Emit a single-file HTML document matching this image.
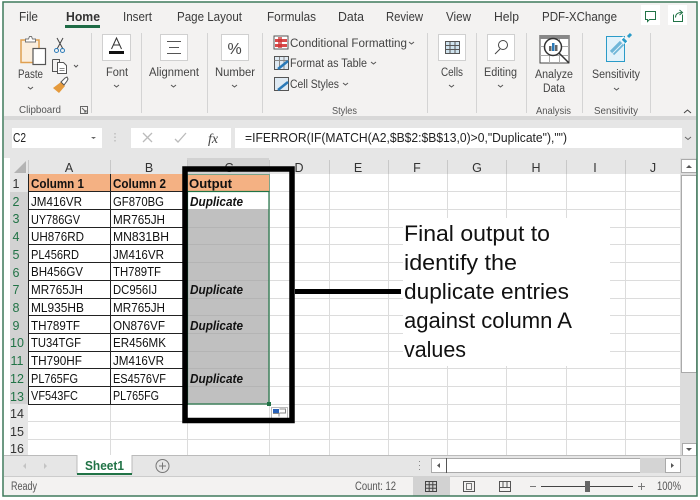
<!DOCTYPE html>
<html><head><meta charset="utf-8"><style>
html,body{margin:0;padding:0;background:#fff;width:700px;height:500px;overflow:hidden}
svg{display:block;filter:blur(.3px)}
text{font-family:"Liberation Sans",sans-serif;fill:#333}
.t{font-size:12.500px;fill:#3a3a3a}
.l{font-size:11.500px;fill:#444}
.s{font-size:10.500px;fill:#555}
.c{font-size:12.500px;fill:#111}
.b{font-size:12.500px;font-weight:bold;fill:#111}
.i{font-size:12.500px;font-weight:bold;font-style:italic;fill:#111}
.r{font-size:12.500px;fill:#217346;text-anchor:middle}
.n{font-size:12.500px;fill:#333;text-anchor:middle}
.k{font-size:22px;fill:#111}
.btn{fill:#fff;stroke:#d0d0d0}
.g{stroke:#dcdcdc;stroke-width:1}
.v{fill:none;stroke:#555;stroke-width:1}
</style></head><body>
<svg width="700" height="500" viewBox="0 0 700 500" xmlns="http://www.w3.org/2000/svg">
<rect width="700" height="500" fill="#fff"/>
<rect x="3" y="2" width="694" height="494" fill="#f3f2f1"/>
<!-- formula bar region -->
<rect x="4" y="116" width="692" height="42" fill="#e6e6e6"/>
<rect x="4" y="116" width="692" height="4" fill="#d8d8d8"/>
<!-- tabs -->
<text class="t" x="19" y="21" textLength="19" lengthAdjust="spacingAndGlyphs">File</text>
<text class="t" x="66" y="21" textLength="34" lengthAdjust="spacingAndGlyphs" style="font-weight:bold;fill:#333">Home</text>
<rect x="65" y="25" width="35" height="3" fill="#1e6b45"/>
<text class="t" x="123" y="21" textLength="29" lengthAdjust="spacingAndGlyphs">Insert</text>
<text class="t" x="177" y="21" textLength="65" lengthAdjust="spacingAndGlyphs">Page Layout</text>
<text class="t" x="267" y="21" textLength="49" lengthAdjust="spacingAndGlyphs">Formulas</text>
<text class="t" x="338" y="21" textLength="26" lengthAdjust="spacingAndGlyphs">Data</text>
<text class="t" x="386" y="21" textLength="37" lengthAdjust="spacingAndGlyphs">Review</text>
<text class="t" x="446" y="21" textLength="25" lengthAdjust="spacingAndGlyphs">View</text>
<text class="t" x="494" y="21" textLength="25" lengthAdjust="spacingAndGlyphs">Help</text>
<text class="t" x="542" y="21" textLength="75" lengthAdjust="spacingAndGlyphs">PDF-XChange</text>
<rect x="641" y="5" width="19" height="20" fill="#fff"/>
<path d="M645.500 11.500h10v8h-6l-2 2v-2h-2z" fill="none" stroke="#217346"/>
<rect x="668" y="5" width="19" height="20" fill="#fff"/>
<path d="M673.500 14.500v7h9v-7M675.500 17.500c0-3 2-5 6-5M679.500 10l3 2.500-3 2.500" fill="none" stroke="#217346"/>
<!-- separators -->
<g fill="#d4d4d4">
<rect x="91" y="33" width="1" height="80"/><rect x="141" y="33" width="1" height="80"/><rect x="207" y="33" width="1" height="80"/><rect x="262" y="33" width="1" height="80"/><rect x="427" y="33" width="1" height="80"/><rect x="476" y="33" width="1" height="80"/><rect x="526" y="33" width="1" height="80"/><rect x="582" y="33" width="1" height="80"/><rect x="650" y="33" width="1" height="80"/>
</g>
<!-- clipboard -->
<rect x="21" y="40" width="18" height="22.500" fill="#fbeedd" stroke="#e0a050" stroke-width="1.500"/>
<path d="M25.500 42v-3h3l1-2.500h2l1 2.500h3v3z" fill="#fff" stroke="#777"/>
<rect x="33" y="48.500" width="12.500" height="16" fill="#fff" stroke="#555" stroke-width="1.200"/>
<path d="M57 38l6 11M63 38l-6 11" stroke="#444" fill="none"/>
<circle cx="56.500" cy="50.500" r="2" fill="none" stroke="#2a7ab8"/><circle cx="62.500" cy="50.500" r="2" fill="none" stroke="#2a7ab8"/>
<path d="M52.500 59.500h7v3M57.500 71.500h-5v-12" fill="none" stroke="#555"/>
<path d="M57.500 62.500h6l3 3v8h-9z" fill="#fff" stroke="#555"/>
<path d="M59.500 68.500h5M59.500 70.500h5" stroke="#888"/>
<path d="M74 65l2 2 2-2" class="v"/>
<path d="M53 88l6 5 6-7-4-4z" fill="#e59a3c"/><path d="M61 82l4-4 2-1 1 2-1 2-3 4z" fill="#fff" stroke="#555"/>
<text class="l" x="18" y="78" textLength="25" lengthAdjust="spacingAndGlyphs">Paste</text>
<path d="M28 87l2.500 2 2.500-2" class="v"/>
<text class="s" x="19" y="113" textLength="42" lengthAdjust="spacingAndGlyphs">Clipboard</text>
<path d="M80.500 106.500h7v7h-7zM82 108l4 4M86 110v2h-2" fill="none" stroke="#666"/>
<!-- font -->
<rect class="btn" x="102.500" y="34.500" width="28" height="26"/>
<path d="M111.500 49l5-11 5 11M113 45h7" fill="none" stroke="#333"/>
<rect x="109" y="51" width="15" height="3" fill="#111"/>
<text class="l" x="106" y="76" textLength="22" lengthAdjust="spacingAndGlyphs">Font</text>
<path d="M114 85l2.500 2 2.500-2" class="v"/>
<!-- alignment -->
<rect class="btn" x="160.500" y="34.500" width="27" height="26"/>
<path d="M167 41.500h14M169 47.500h10M167 53.500h14" stroke="#555" fill="none"/>
<text class="l" x="149" y="76" textLength="50" lengthAdjust="spacingAndGlyphs">Alignment</text>
<path d="M171 85l2.500 2 2.500-2" class="v"/>
<!-- number -->
<rect class="btn" x="221.500" y="34.500" width="27" height="26"/>
<text x="227.500" y="54" style="font-size:16px;fill:#444">%</text>
<text class="l" x="215" y="76" textLength="40" lengthAdjust="spacingAndGlyphs">Number</text>
<path d="M232 85l2.500 2 2.500-2" class="v"/>
<!-- styles -->
<rect x="274" y="36" width="14" height="13" fill="#fff" stroke="#555"/>
<rect x="275" y="39" width="12" height="3" fill="#d94a4a"/><rect x="275" y="44" width="12" height="3" fill="#d94a4a"/><rect x="278" y="37" width="4" height="11" fill="#c33" opacity=".7"/>
<text class="l" x="290" y="47" textLength="117" lengthAdjust="spacingAndGlyphs">Conditional Formatting</text>
<path d="M409 42l2.500 2 2.500-2" class="v"/>
<rect x="274.500" y="56.500" width="14" height="13" fill="#dfeaf3" stroke="#555"/>
<path d="M274.500 60.500h14M279.500 57v12M284 57v12" stroke="#888" fill="none"/>
<path d="M278 69l10-8" stroke="#2a7ab8" stroke-width="2.500"/>
<text class="l" x="290" y="67" textLength="77" lengthAdjust="spacingAndGlyphs">Format as Table</text>
<path d="M371 62l2.500 2 2.500-2" class="v"/>
<rect x="274.500" y="77.500" width="14" height="13" fill="#dfeaf3" stroke="#555"/>
<path d="M278 90l10-8" stroke="#2a7ab8" stroke-width="2.500"/>
<text class="l" x="290" y="88" textLength="49" lengthAdjust="spacingAndGlyphs">Cell Styles</text>
<path d="M343 83l2.500 2 2.500-2" class="v"/>
<text class="s" x="332" y="114" textLength="25" lengthAdjust="spacingAndGlyphs">Styles</text>
<!-- cells -->
<rect class="btn" x="438.500" y="34.500" width="27" height="26"/>
<rect x="445.500" y="41.500" width="14" height="12" fill="#cfe3ee" stroke="#555"/>
<path d="M445 45.500h14M445 49.500h14M450 41v12M455 41v12" stroke="#555"/>
<text class="l" x="441" y="76" textLength="22" lengthAdjust="spacingAndGlyphs">Cells</text>
<path d="M449 85l2.500 2 2.500-2" class="v"/>
<!-- editing -->
<rect class="btn" x="487.500" y="34.500" width="27" height="26"/>
<circle cx="503" cy="45" r="4.500" fill="none" stroke="#444"/><path d="M500 49l-5 5" stroke="#444"/>
<text class="l" x="484" y="76" textLength="33" lengthAdjust="spacingAndGlyphs">Editing</text>
<path d="M498 85l2.500 2 2.500-2" class="v"/>
<!-- analyze -->
<rect x="540" y="35.500" width="29" height="27.500" fill="#fff" stroke="#444"/>
<rect x="540" y="35" width="29" height="4" fill="#888"/>
<path d="M540 46.500h29M540 55.500h29M549.500 39v24M559.500 39v24" stroke="#aaa" fill="none"/>
<circle cx="553" cy="47" r="8.500" fill="#fff" stroke="#333" stroke-width="1.500"/>
<rect x="549" y="46" width="2.500" height="5" fill="#666"/><rect x="552" y="43" width="2.500" height="8" fill="#2a7ab8"/><rect x="555" y="45" width="2.500" height="6" fill="#666"/>
<path d="M559 53l10 10" stroke="#333" stroke-width="1.500"/>
<text class="l" x="535" y="78" textLength="38" lengthAdjust="spacingAndGlyphs">Analyze</text>
<text class="l" x="543" y="92" textLength="22" lengthAdjust="spacingAndGlyphs">Data</text>
<text class="s" x="536" y="114" textLength="35" lengthAdjust="spacingAndGlyphs">Analysis</text>
<!-- sensitivity -->
<path d="M606.500 36.500h18v25h-18z" fill="#e3f2fa" stroke="#2a9bc8"/>
<path d="M612 53l10-10" stroke="#6fb6d8" stroke-width="6"/>
<path d="M612.500 53.500l10-10" stroke="#e3f2fa" stroke-width="1"/>
<path d="M623 42l3-3" stroke="#fff" stroke-width="8"/>
<path d="M623.500 41.500l2-2" stroke="#2a9bc8" stroke-width="5"/>
<path d="M628 37l3-3" stroke="#2a9bc8" stroke-width="3"/>
<text class="l" x="592" y="78" textLength="48" lengthAdjust="spacingAndGlyphs">Sensitivity</text>
<path d="M614 88l2.500 2 2.500-2" class="v"/>
<text class="s" x="594" y="114" textLength="44" lengthAdjust="spacingAndGlyphs">Sensitivity</text>
<path d="M684 113l3.500-3 3.500 3" fill="none" stroke="#444"/>
<!-- name/formula -->
<rect x="12" y="128" width="90" height="20" fill="#fff"/>
<text x="13" y="142" textLength="13" lengthAdjust="spacingAndGlyphs" style="font-size:13px;fill:#222">C2</text>
<path d="M91 137l2.500 2 2.500-2z" fill="#666"/>
<path d="M115 133v10" stroke="#aaa" stroke-dasharray="1.500 2"/>
<rect x="131" y="128" width="100" height="20" fill="#fff"/>
<path d="M143 133l9 9M152 133l-9 9" stroke="#bbb" fill="none" stroke-width="1.300"/>
<path d="M175 139l3 3 8-9" stroke="#bbb" fill="none" stroke-width="1.300"/>
<text x="208" y="143" style="font-family:'Liberation Serif',serif;font-style:italic;font-size:14px;fill:#444">fx</text>
<rect x="235" y="128" width="447" height="20" fill="#fff"/>
<text class="t" x="245" y="142" textLength="322" lengthAdjust="spacingAndGlyphs" style="fill:#222">=IFERROR(IF(MATCH(A2,$B$2:$B$13,0)&gt;0,"Duplicate"),"")</text>
<path d="M685 137l3 2.500 3-2.500" fill="none" stroke="#666"/>
<!-- grid background -->
<rect x="4" y="158" width="692" height="297" fill="#fff"/>
<!-- column header -->
<rect x="10" y="158" width="670" height="16" fill="#e6e6e6"/>
<rect x="187" y="158" width="82" height="16" fill="#d2d2d2"/>
<path d="M14 173l12-12v12z" fill="#b4b4b4"/>
<g fill="#c8c8c8"><rect x="28" y="160" width="1" height="14"/><rect x="110" y="160" width="1" height="14"/><rect x="187" y="160" width="1" height="14"/><rect x="269" y="160" width="1" height="14"/><rect x="329" y="160" width="1" height="14"/><rect x="388" y="160" width="1" height="14"/><rect x="447" y="160" width="1" height="14"/><rect x="506" y="160" width="1" height="14"/><rect x="566" y="160" width="1" height="14"/><rect x="625" y="160" width="1" height="14"/></g>
<text class="n" x="69" y="172">A</text><text class="n" x="149" y="172">B</text><text class="n" x="229" y="172">C</text><text class="n" x="299" y="172">D</text><text class="n" x="358" y="172">E</text><text class="n" x="417" y="172">F</text><text class="n" x="477" y="172">G</text><text class="n" x="536" y="172">H</text><text class="n" x="595" y="172">I</text><text class="n" x="653" y="172">J</text>
<!-- row header -->
<rect x="10" y="174" width="18" height="281" fill="#e6e6e6"/>
<rect x="10" y="192" width="18" height="212" fill="#d2d2d2"/>
<!-- gridlines -->
<g class="g">
<path d="M28 191.500h652M28 209.500h652M28 227.500h652M28 244.500h652M28 262.500h652M28 280.500h652M28 298.500h652M28 315.500h652M28 333.500h652M28 351.500h652M28 368.500h652M28 386.500h652M28 404.500h652M28 421.500h652M28 439.500h652"/>
<path d="M110.500 174v281M187.500 174v281M269.500 174v281M329.500 174v281M388.500 174v281M447.500 174v281M506.500 174v281M566.500 174v281M625.500 174v281M680.500 158v297"/>
</g>
<!-- row nums -->
<text class="n" x="16" y="188">1</text><text class="r" x="16" y="206">2</text><text class="r" x="16" y="223">3</text><text class="r" x="16" y="241">4</text><text class="r" x="16" y="259">5</text><text class="r" x="16" y="277">6</text><text class="r" x="16" y="294">7</text><text class="r" x="16" y="312">8</text><text class="r" x="16" y="330">9</text><text class="r" x="17" y="347">10</text><text class="r" x="17" y="365">11</text><text class="r" x="17" y="383">12</text><text class="r" x="17" y="401">13</text><text class="n" x="17" y="418">14</text><text class="n" x="17" y="436">15</text><text class="n" x="17" y="453">16</text>
<!-- data fills -->
<rect x="28" y="174" width="241" height="18" fill="#f4b183"/>
<rect x="188" y="209" width="81" height="195" fill="#c0c0c0"/>
<!-- cell borders -->
<g stroke="#222" stroke-width="1" fill="none">
<path d="M28.500 174v230M110.500 174v230M187.500 174v18"/>
<path d="M28 191.500h160M28 209.500h160M28 227.500h160M28 244.500h160M28 262.500h160M28 280.500h160M28 298.500h160M28 315.500h160M28 333.500h160M28 351.500h160M28 368.500h160M28 386.500h160M28 404.500h160"/>
</g>
<g stroke="#b4b4b4" fill="none"><path d="M188 227.500h81M188 244.500h81M188 262.500h81M188 280.500h81M188 298.500h81M188 315.500h81M188 333.500h81M188 351.500h81M188 368.500h81M188 386.500h81"/></g>
<rect x="187.500" y="174.500" width="82" height="17" fill="none" stroke="#7ba58c"/>
<rect x="187.500" y="191.500" width="81.500" height="212.500" fill="none" stroke="#217346" stroke-width="1.200"/>
<rect x="267" y="402" width="4" height="4" fill="#217346"/>
<!-- text -->
<text class="b" x="31" y="188" textLength="53" lengthAdjust="spacingAndGlyphs">Column 1</text>
<text class="b" x="113" y="188" textLength="53" lengthAdjust="spacingAndGlyphs">Column 2</text>
<text class="b" x="189" y="188" textLength="43" lengthAdjust="spacingAndGlyphs">Output</text>
<text class="c" x="31" y="206" textLength="51" lengthAdjust="spacingAndGlyphs">JM416VR</text><text class="c" x="113" y="206" textLength="51" lengthAdjust="spacingAndGlyphs">GF870BG</text>
<text class="c" x="31" y="224" textLength="49" lengthAdjust="spacingAndGlyphs">UY786GV</text><text class="c" x="113" y="224" textLength="52" lengthAdjust="spacingAndGlyphs">MR765JH</text>
<text class="c" x="31" y="241" textLength="53" lengthAdjust="spacingAndGlyphs">UH876RD</text><text class="c" x="113" y="241" textLength="56" lengthAdjust="spacingAndGlyphs">MN831BH</text>
<text class="c" x="31" y="259" textLength="48" lengthAdjust="spacingAndGlyphs">PL456RD</text><text class="c" x="113" y="259" textLength="51" lengthAdjust="spacingAndGlyphs">JM416VR</text>
<text class="c" x="31" y="276" textLength="52" lengthAdjust="spacingAndGlyphs">BH456GV</text><text class="c" x="113" y="276" textLength="48" lengthAdjust="spacingAndGlyphs">TH789TF</text>
<text class="c" x="31" y="294" textLength="52" lengthAdjust="spacingAndGlyphs">MR765JH</text><text class="c" x="113" y="294" textLength="44" lengthAdjust="spacingAndGlyphs">DC956IJ</text>
<text class="c" x="31" y="312" textLength="53" lengthAdjust="spacingAndGlyphs">ML935HB</text><text class="c" x="113" y="312" textLength="52" lengthAdjust="spacingAndGlyphs">MR765JH</text>
<text class="c" x="31" y="330" textLength="49" lengthAdjust="spacingAndGlyphs">TH789TF</text><text class="c" x="113" y="330" textLength="52" lengthAdjust="spacingAndGlyphs">ON876VF</text>
<text class="c" x="31" y="347" textLength="50" lengthAdjust="spacingAndGlyphs">TU34TGF</text><text class="c" x="113" y="347" textLength="53" lengthAdjust="spacingAndGlyphs">ER456MK</text>
<text class="c" x="31" y="365" textLength="51" lengthAdjust="spacingAndGlyphs">TH790HF</text><text class="c" x="113" y="365" textLength="51" lengthAdjust="spacingAndGlyphs">JM416VR</text>
<text class="c" x="31" y="383" textLength="47" lengthAdjust="spacingAndGlyphs">PL765FG</text><text class="c" x="113" y="383" textLength="53" lengthAdjust="spacingAndGlyphs">ES4576VF</text>
<text class="c" x="31" y="400" textLength="47" lengthAdjust="spacingAndGlyphs">VF543FC</text><text class="c" x="113" y="400" textLength="46" lengthAdjust="spacingAndGlyphs">PL765FG</text>
<text class="i" x="190" y="206" textLength="53" lengthAdjust="spacingAndGlyphs">Duplicate</text>
<text class="i" x="190" y="294" textLength="53" lengthAdjust="spacingAndGlyphs">Duplicate</text>
<text class="i" x="190" y="330" textLength="53" lengthAdjust="spacingAndGlyphs">Duplicate</text>
<text class="i" x="190" y="383" textLength="53" lengthAdjust="spacingAndGlyphs">Duplicate</text>
<!-- quick analysis -->
<rect x="271.500" y="407.500" width="16" height="11" fill="#fff" stroke="#bbb"/>
<rect x="273" y="409" width="6" height="4" fill="#2a62b8"/><path d="M279.500 409h6v4h-6M273 413.500h6v3" fill="none" stroke="#888"/>
<!-- thick box -->
<rect x="185" y="169" width="107" height="251.500" fill="none" stroke="#000" stroke-width="5.500"/>
<!-- callout -->
<rect x="403" y="218" width="207" height="148" fill="#fff"/>
<rect x="295" y="289" width="106" height="5" fill="#000"/>
<text class="k" x="404" y="241" textLength="146" lengthAdjust="spacingAndGlyphs">Final output to</text>
<text class="k" x="404" y="270" textLength="113" lengthAdjust="spacingAndGlyphs">identify the</text>
<text class="k" x="404" y="299" textLength="165" lengthAdjust="spacingAndGlyphs">duplicate entries</text>
<text class="k" x="404" y="328" textLength="168" lengthAdjust="spacingAndGlyphs">against column A</text>
<text class="k" x="404" y="357" textLength="62" lengthAdjust="spacingAndGlyphs">values</text>
<!-- vertical scroll -->
<rect x="680" y="158" width="17" height="298" fill="#dcdcdc"/>
<rect x="681.500" y="159.500" width="15" height="13" fill="#fff" stroke="#aaa"/>
<path d="M686 168l3-3 3 3z" fill="#555"/>
<rect x="681.500" y="175.500" width="15" height="197" fill="#fff" stroke="#aaa"/>
<rect x="682.500" y="443.500" width="14" height="12" fill="#fff" stroke="#aaa"/>
<path d="M686 448l3 3 3-3z" fill="#555"/>
<!-- tab bar -->
<rect x="4" y="455" width="692" height="21" fill="#e6e6e6"/>
<rect x="4" y="455" width="692" height="1" fill="#bbb"/>
<path d="M26 463l-3 3 3 3zM44 463l3 3-3 3z" fill="#c4c4c4"/>
<rect x="77" y="455" width="55" height="19" fill="#fff"/>
<path d="M77 455v19M132 455v19" stroke="#bbb"/>
<rect x="77" y="473" width="55" height="2" fill="#217346"/>
<text x="85" y="470" textLength="39" lengthAdjust="spacingAndGlyphs" style="font-size:12.500px;font-weight:bold;fill:#217346">Sheet1</text>
<circle cx="162.500" cy="466" r="6.500" fill="none" stroke="#777"/>
<path d="M159 466h7M162.500 462.500v7" stroke="#777"/>
<path d="M419.500 461v1M419.500 465v1M419.500 469v1" stroke="#888"/>
<rect x="431.500" y="458.500" width="15" height="14" fill="#fff" stroke="#aaa"/>
<path d="M440 463l-3 2.500 3 2.500z" fill="#555"/>
<rect x="446.500" y="458.500" width="194" height="14" fill="#fff" stroke="#aaa"/>
<rect x="446" y="458" width="1" height="15" fill="#555"/>
<rect x="640" y="458" width="25" height="15" fill="#d4d4d4"/>
<rect x="665.500" y="458.500" width="15" height="14" fill="#fff" stroke="#aaa"/>
<path d="M671 463l3 2.500-3 2.500z" fill="#555"/>
<!-- status -->
<rect x="4" y="476" width="692" height="20" fill="#f3f2f1"/>
<rect x="4" y="476" width="692" height="1" fill="#ccc"/>
<text class="l" x="11" y="490" textLength="26" lengthAdjust="spacingAndGlyphs" style="fill:#555">Ready</text>
<text class="l" x="355" y="490" textLength="41" lengthAdjust="spacingAndGlyphs" style="fill:#555">Count: 12</text>
<rect x="413" y="476" width="37" height="20" fill="#d2d2d2"/>
<path d="M425.500 481.500h11v10h-11zM425 484.800h12M425 488.200h12M429.200 481v11M432.800 481v11" fill="none" stroke="#444"/>
<rect x="463.500" y="481.500" width="11" height="10" fill="none" stroke="#555"/><rect x="466.500" y="483.500" width="5" height="6" fill="none" stroke="#777"/>
<path d="M499.500 481.500h11v10h-11zM499 487.500h12M503 481.500v6M507 481.500v6" fill="none" stroke="#555"/>
<rect x="530" y="486" width="6" height="1" fill="#777"/>
<rect x="541" y="486" width="92" height="1" fill="#444"/>
<rect x="585" y="481" width="5" height="11" fill="#666"/>
<path d="M638 486.500h7M641.500 483v7" stroke="#777"/>
<text class="l" x="657" y="490" textLength="24" lengthAdjust="spacingAndGlyphs" style="fill:#555">100%</text>
<!-- frame -->
<rect x="3" y="2" width="694" height="494" fill="none" stroke="#3f7a5c" stroke-width="1.500"/>
</svg>
</body></html>
